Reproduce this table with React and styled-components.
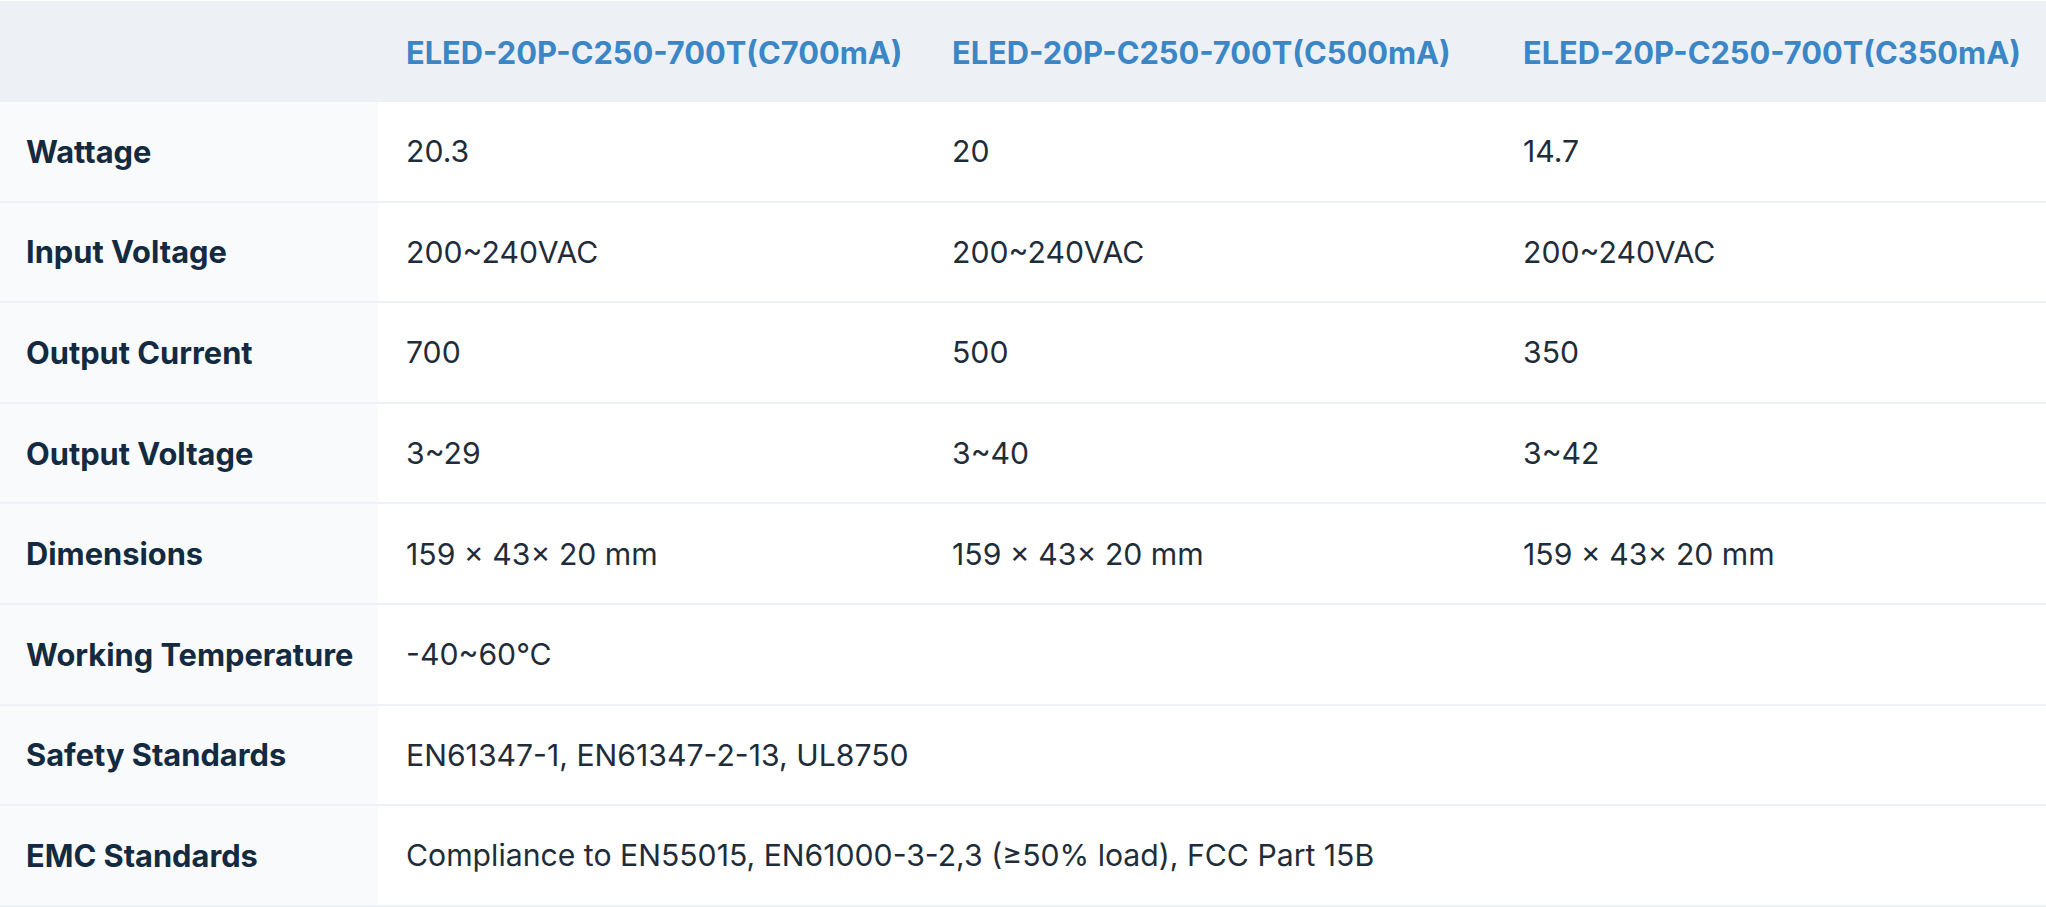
import React from 'react';
import styled, { createGlobalStyle } from 'styled-components';

const GlobalStyle = createGlobalStyle`
  html, body {
    margin: 0;
    padding: 0;
    background: #ffffff;
  }
  body {
    font-family: Inter, "Noto Sans", "Liberation Sans", sans-serif;
    -webkit-font-smoothing: antialiased;
  }
`;

const COLUMNS = '378px 546px 571px 1fr';

const Table = styled.div`
  width: 100%;
  padding-top: 1px;
  background: #ffffff;
`;

const HeaderRow = styled.div`
  display: grid;
  grid-template-columns: ${COLUMNS};
  height: 101px;
  background: #edf1f6;
`;

const HeaderCell = styled.div`
  display: flex;
  align-items: center;
  padding: 2px 0 0 28px;
  color: #3b86c6;
  font-size: 30.8px;
  font-weight: 700;
  white-space: nowrap;
`;

const Row = styled.div`
  display: grid;
  grid-template-columns: ${COLUMNS};
  height: 100.6px;
  box-sizing: border-box;
  border-bottom: 2px solid #eef1f5;
`;

const Label = styled.div`
  display: flex;
  align-items: center;
  padding-left: 26px;
  background: #f8fafc;
  color: #132a40;
  font-size: 30.8px;
  font-weight: 700;
  white-space: nowrap;
`;

const Cell = styled.div`
  display: flex;
  align-items: center;
  padding-left: 28px;
  grid-column: span ${(p) => p.$span || 1};
  color: #1f2d3a;
  font-size: 30.2px;
  font-weight: 400;
  white-space: nowrap;
`;

const models = [
  'ELED-20P-C250-700T(C700mA)',
  'ELED-20P-C250-700T(C500mA)',
  'ELED-20P-C250-700T(C350mA)',
];

const specs = [
  { label: 'Wattage', values: ['20.3', '20', '14.7'] },
  { label: 'Input Voltage', values: ['200~240VAC', '200~240VAC', '200~240VAC'] },
  { label: 'Output Current', values: ['700', '500', '350'] },
  { label: 'Output Voltage', values: ['3~29', '3~40', '3~42'] },
  { label: 'Dimensions', values: ['159 × 43× 20 mm', '159 × 43× 20 mm', '159 × 43× 20 mm'] },
  { label: 'Working Temperature', values: ['-40~60°C'], span: 3 },
  { label: 'Safety Standards', values: ['EN61347-1, EN61347-2-13, UL8750'], span: 3 },
  {
    label: 'EMC Standards',
    values: ['Compliance to EN55015, EN61000-3-2,3 (≥50% load), FCC Part 15B'],
    span: 3,
  },
];

const App = () => {
  return (
    <>
      <GlobalStyle />
      <Table>
        <HeaderRow>
          <div />
          {models.map((m) => (
            <HeaderCell key={m}>{m}</HeaderCell>
          ))}
        </HeaderRow>
        {specs.map((s) => (
          <Row key={s.label}>
            <Label>{s.label}</Label>
            {s.values.map((v, i) => (
              <Cell key={i} $span={s.span}>
                {v}
              </Cell>
            ))}
          </Row>
        ))}
      </Table>
    </>
  );
};

export default App;
